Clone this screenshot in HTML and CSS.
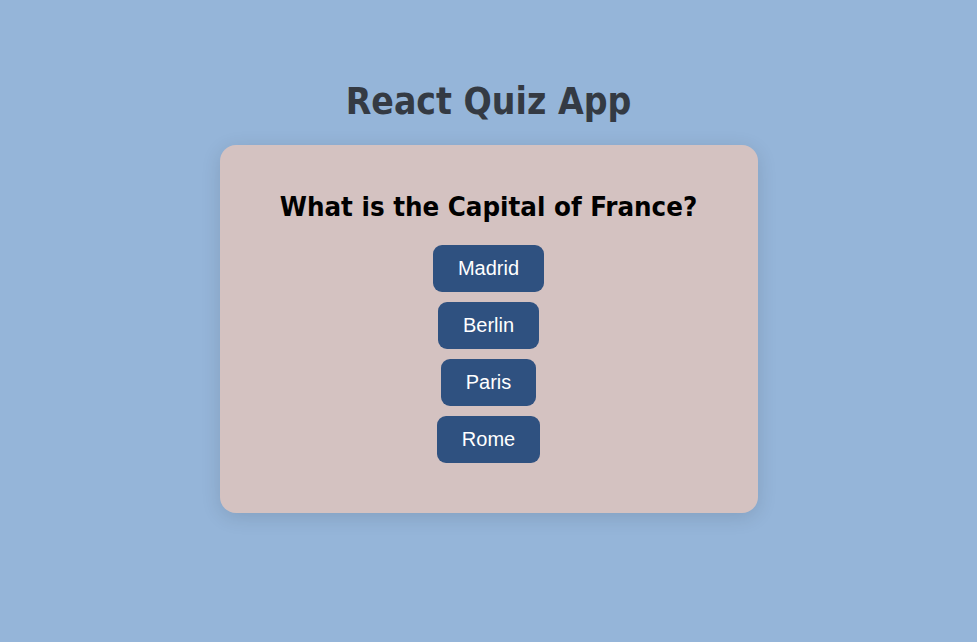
FILE: index.html
```html
<!DOCTYPE html>
<html>
<head>
<meta charset="utf-8">
<link rel="stylesheet" href="styles.css">
</head>
<body>
<div class="app">
  <h1 class="title">React Quiz App</h1>
  <div class="card">
    <h2 class="question">What is the Capital of France?</h2>
    <div class="options">
      <button class="option">Madrid</button>
      <button class="option">Berlin</button>
      <button class="option">Paris</button>
      <button class="option">Rome</button>
    </div>
  </div>
</div>
</body>
</html>
```
FILE: styles.css
```css
html, body {
  margin: 0;
  padding: 0;
  height: 100%;
}
body {
  background: #95b5d9;
  font-family: "DejaVu Sans Condensed", "DejaVu Sans", sans-serif;
}
.app {
  display: flex;
  flex-direction: column;
  align-items: center;
  padding-top: 79px;
}
.title {
  margin: 0 0 20px;
  font-size: 37px;
  font-weight: bold;
  color: #343a43;
  line-height: 46px;
}
.card {
  width: 538px;
  height: 368px;
  box-sizing: border-box;
  background: #d4c2c1;
  border-radius: 16px;
  box-shadow: 0 4px 20px rgba(0, 0, 0, 0.12);
  padding: 44px 20px 0;
  display: flex;
  flex-direction: column;
  align-items: center;
}
.question {
  margin: 0 0 20px;
  font-size: 27.4px;
  line-height: 36px;
  font-weight: bold;
  color: #000;
}
.options {
  display: flex;
  flex-direction: column;
  align-items: center;
  gap: 10px;
}
.option {
  font-family: "Liberation Sans", Arial, sans-serif;
  font-size: 20px;
  line-height: 23px;
  color: #fff;
  background: #2f5180;
  border: none;
  border-radius: 9px;
  padding: 12px 24.5px;
}
```
